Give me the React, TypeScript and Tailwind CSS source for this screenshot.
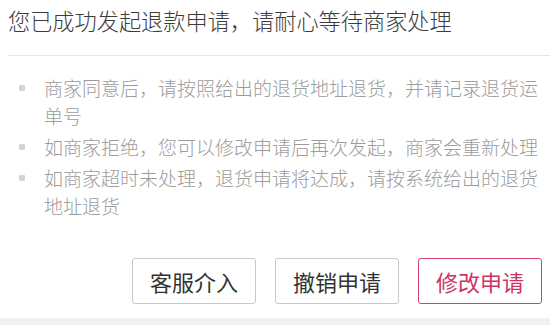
import React from 'react';

const tips = [
  '商家同意后，请按照给出的退货地址退货，并请记录退货运单号',
  '如商家拒绝，您可以修改申请后再次发起，商家会重新处理',
  '如商家超时未处理，退货申请将达成，请按系统给出的退货地址退货',
];

const App: React.FC = () => {
  return (
    <div className="w-[550px] h-[325px] flex flex-col bg-[#f2f2f2] font-['Noto_Sans_CJK_SC',sans-serif]">
      <div className="h-[318px] bg-white flex flex-col">
        <h1 className="pl-2 text-[22.2px] leading-[40px] text-[#3c3c3c] font-light">
          您已成功发起退款申请，请耐心等待商家处理
        </h1>
        <div className="ml-2 mt-[15px] border-t border-[#e6e6e6]" />

        <ul className="pt-[18px] pr-[8px] flex flex-col gap-[3px]">
          {tips.map((t, i) => (
            <li key={i} className="flex text-[19px] leading-[28px] text-[#9c9c9c] font-light">
              <span className="w-[44px] shrink-0 flex justify-center pt-[11px]">
                <span className="block w-[6px] h-[6px] bg-[#d4d4d4] rounded-[1px]" />
              </span>
              <span className="flex-1">{t}</span>
            </li>
          ))}
        </ul>

        <div className="mt-auto mb-[14px] pr-2 flex justify-end gap-[19px]">
          <button className="w-[124px] h-[46px] border border-[#c8c8c8] rounded-[3px] text-[22px] text-[#333] bg-white">
            客服介入
          </button>
          <button className="w-[124px] h-[46px] border border-[#c8c8c8] rounded-[3px] text-[22px] text-[#333] bg-white">
            撤销申请
          </button>
          <button className="w-[124px] h-[46px] border border-[#d9416f] rounded-[3px] text-[22px] text-[#cc3366] bg-white">
            修改申请
          </button>
        </div>
      </div>
    </div>
  );
};

export default App;
